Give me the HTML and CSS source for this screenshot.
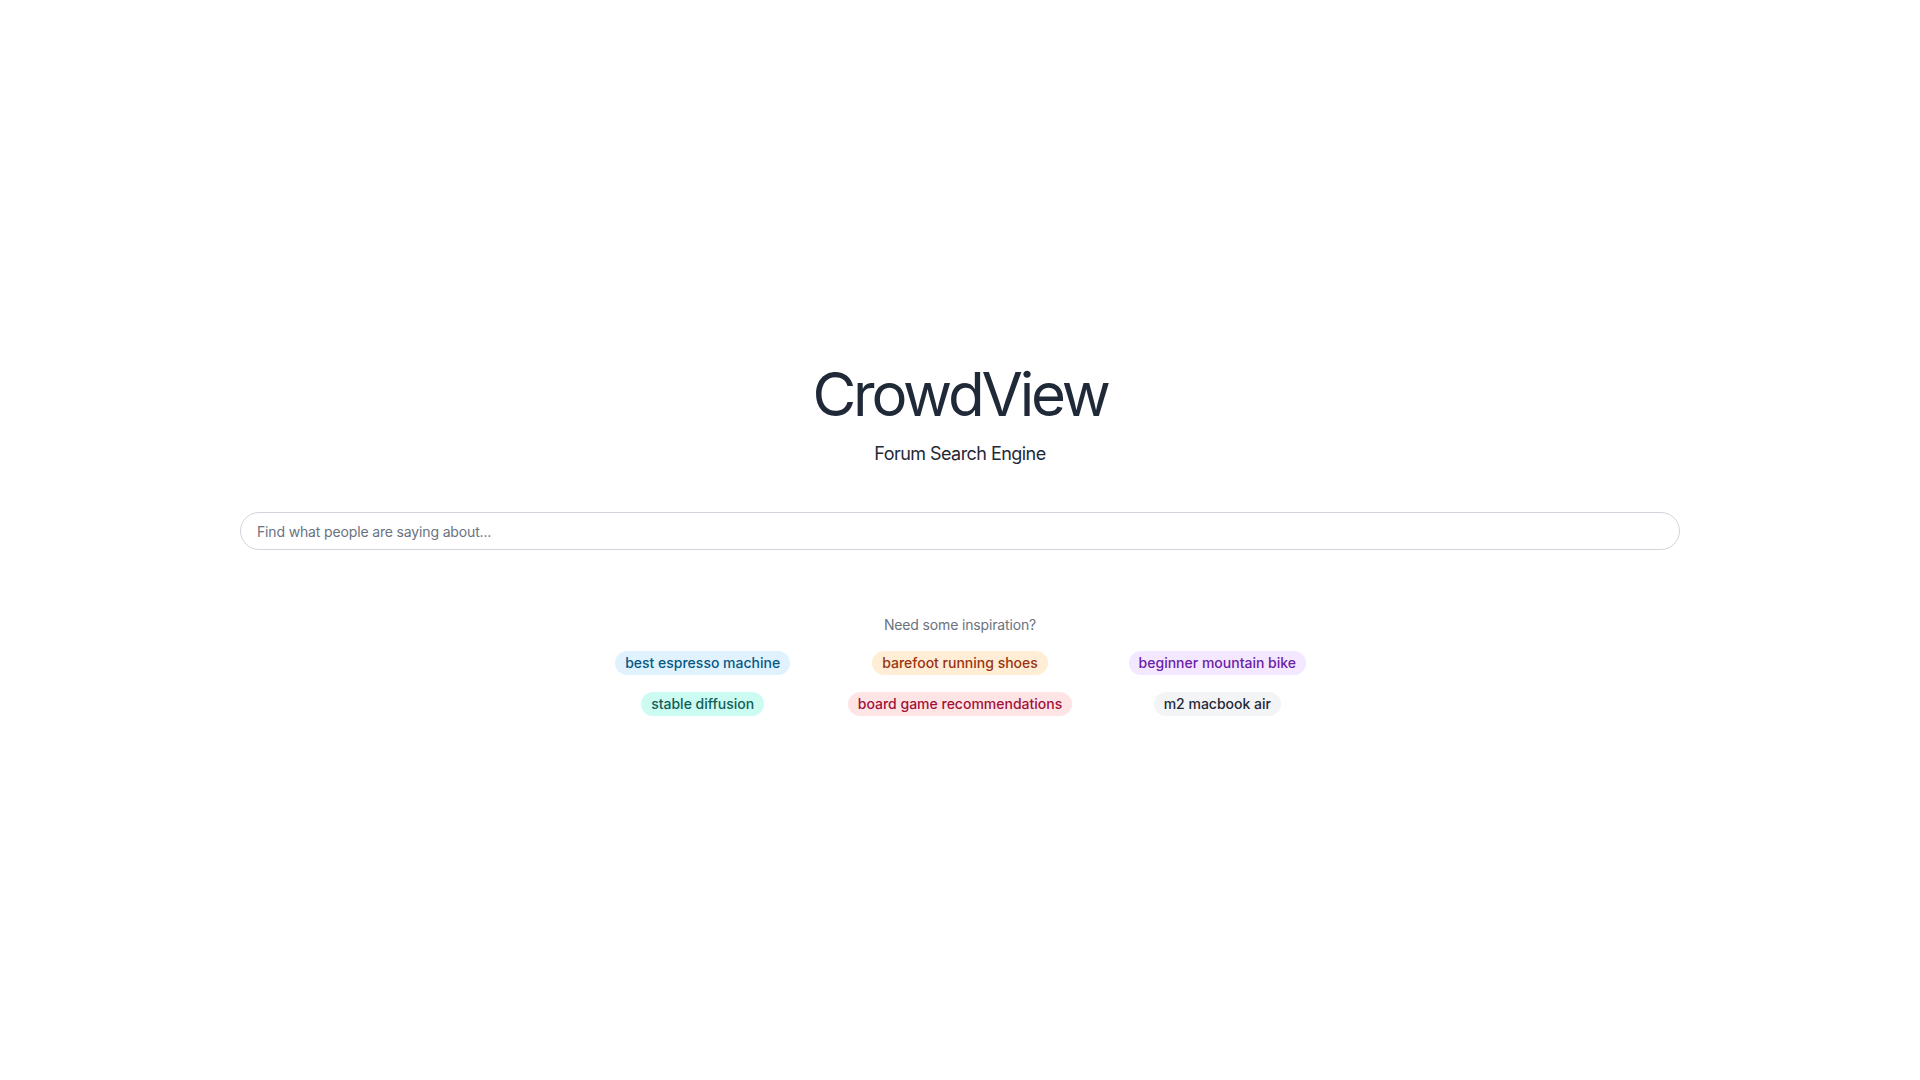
FILE: index.html
```html
<!DOCTYPE html>
<html lang="en">
<head>
<meta charset="utf-8">
<title>CrowdView</title>
<link rel="stylesheet" href="styles.css">
</head>
<body>
<main class="page">
  <section class="hero">
    <h1 class="title">CrowdView</h1>
    <p class="subtitle">Forum Search Engine</p>
    <input class="search" type="text" placeholder="Find what people are saying about...">
    <p class="inspire">Need some inspiration?</p>
    <div class="chips">
      <span class="chip chip-sky">best espresso machine</span>
      <span class="chip chip-orange">barefoot running shoes</span>
      <span class="chip chip-purple">beginner mountain bike</span>
      <span class="chip chip-teal">stable diffusion</span>
      <span class="chip chip-rose">board game recommendations</span>
      <span class="chip chip-gray">m2 macbook air</span>
    </div>
  </section>
</main>
</body>
</html>
```

FILE: styles.css
```css
* { box-sizing: border-box; }
html, body { margin: 0; padding: 0; background: #ffffff; }
body {
  font-family: Inter, "Noto Sans", "Liberation Sans", sans-serif;
  color: #1f2937;
}
.page {
  min-height: 100vh;
  display: flex;
  align-items: center;
  justify-content: center;
}
.hero {
  width: 1440px;
  display: flex;
  flex-direction: column;
  align-items: center;
}
.title {
  margin: 0;
  font-size: 60px;
  line-height: 60px;
  font-weight: 400;
  color: #1f2937;
  letter-spacing: -3.2px;
}
.subtitle {
  margin: 16px 0 0;
  font-size: 18px;
  line-height: 28px;
  color: #1f2937;
  letter-spacing: -0.55px;
}
.search {
  margin-top: 44px;
  width: 1440px;
  height: 38px;
  border: 1px solid #d1d5db;
  border-radius: 9999px;
  padding: 8px 16px;
  font-family: inherit;
  font-size: 14px;
  line-height: 20px;
  color: #1f2937;
  background: #fff;
  outline: none;
  letter-spacing: -0.15px;
}
.search::placeholder { color: #6b7280; }
.inspire {
  margin: 65px 0 0;
  font-size: 14px;
  line-height: 20px;
  color: #6b7280;
  letter-spacing: -0.15px;
}
.chips {
  margin-top: 16px;
  width: 772px;
  display: grid;
  grid-template-columns: repeat(3, 1fr);
  row-gap: 17px;
  justify-items: center;
}
.chip {
  display: inline-block;
  padding: 2px 10px;
  border-radius: 9999px;
  font-size: 14px;
  line-height: 20px;
  font-weight: 500;
}
.chip-sky { background: #e0f2fe; color: #075985; }
.chip-orange { background: #ffedd5; color: #9a3412; }
.chip-purple { background: #f3e8ff; color: #6b21a8; }
.chip-teal { background: #ccfbf1; color: #115e59; }
.chip-rose { background: #ffe4e6; color: #9f1239; }
.chip-gray { background: #f3f4f6; color: #1f2937; }
```
